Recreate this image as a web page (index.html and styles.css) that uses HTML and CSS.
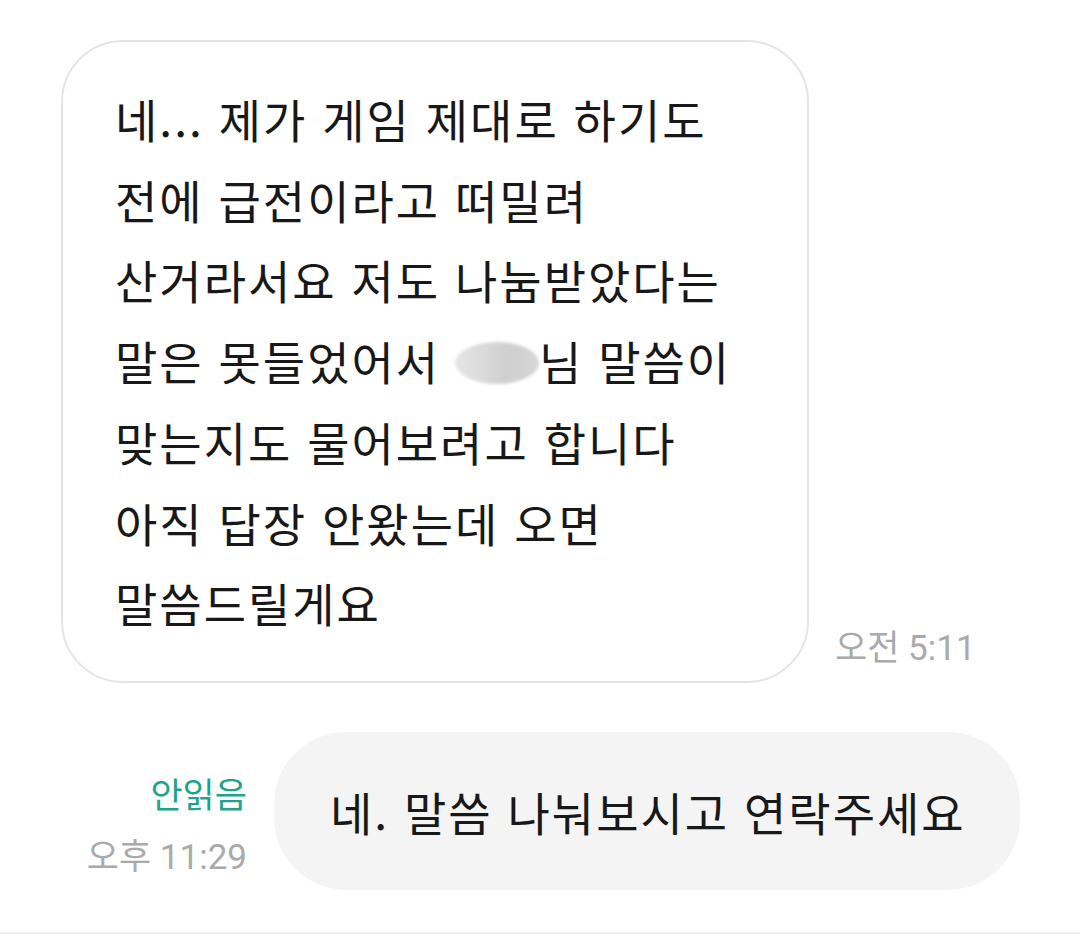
FILE: index.html
```html
<!DOCTYPE html>
<html lang="ko">
<head>
<meta charset="utf-8">
<link rel="stylesheet" href="styles.css">
</head>
<body>
<div class="chat">
  <div class="row row-in">
    <div class="bubble bubble-in">
      <p class="msg">네... 제가 게임 제대로 하기도<br>전에 급전이라고 떠밀려<br>산거라서요 저도 나눔받았다는<br>말은 못들었어서 <span class="redact"></span>님 말씀이<br>맞는지도 물어보려고 합니다<br>아직 답장 안왔는데 오면<br>말씀드릴게요</p>
    </div>
    <div class="meta meta-in">
      <span class="time">오전 5:11</span>
    </div>
  </div>
  <div class="row row-out">
    <div class="meta meta-out">
      <span class="unread">안읽음</span>
      <span class="time">오후 11:29</span>
    </div>
    <div class="bubble bubble-out">
      <p class="msg">네. 말씀 나눠보시고 연락주세요</p>
    </div>
  </div>
</div>
<div class="divider"></div>
</body>
</html>
```

FILE: styles.css
```css
* { box-sizing: border-box; }
html, body { margin: 0; padding: 0; background: #ffffff; }
body {
  width: 1080px;
  height: 949px;
  overflow: hidden;
  font-family: "Noto Sans CJK KR", "Noto Sans", sans-serif;
  color: #181818;
}
.chat {
  padding: 40px 60px 0 61px;
  height: 932px;
}
.row {
  display: flex;
  align-items: flex-end;
}
.row-in { gap: 26px; }
.row-out {
  justify-content: flex-end;
  gap: 27px;
  margin-top: 49px;
}
.bubble { border-radius: 62px; }
.bubble-in {
  width: 748px;
  height: 643px;
  border: 2px solid #e4e4e4;
  padding: 60px 20px 0 52px;
}
.bubble-out {
  width: 746px;
  height: 158px;
  background: #f4f4f4;
  border-radius: 72px;
  display: flex;
  align-items: center;
  padding-left: 56px;
}
.msg {
  margin: 0;
  font-size: 46px;
  line-height: 80.7px;
  letter-spacing: 2px;
  white-space: nowrap;
}
.bubble-in .msg { margin-top: -24px; }
.redact {
  display: inline-block;
  width: 84px;
  height: 42px;
  vertical-align: -4px;
  border-radius: 50%;
  background: linear-gradient(90deg, #e6e6e6 0%, #d9d9d9 35%, #cfcfcf 60%, #d6d6d6 100%);
  filter: blur(1.5px);
}
.meta {
  display: flex;
  flex-direction: column;
  align-items: flex-end;
  font-family: "Roboto", "Noto Sans CJK KR", sans-serif;
  font-size: 35px;
  line-height: 1.5;
}
.meta-in { padding-bottom: 8px; }
.meta-out { padding-bottom: 6px; }
.time { color: #aaaaaa; }
.unread { color: #1fa38c; margin-bottom: 8px; }
.divider {
  height: 2px;
  background: #efefef;
}
```
